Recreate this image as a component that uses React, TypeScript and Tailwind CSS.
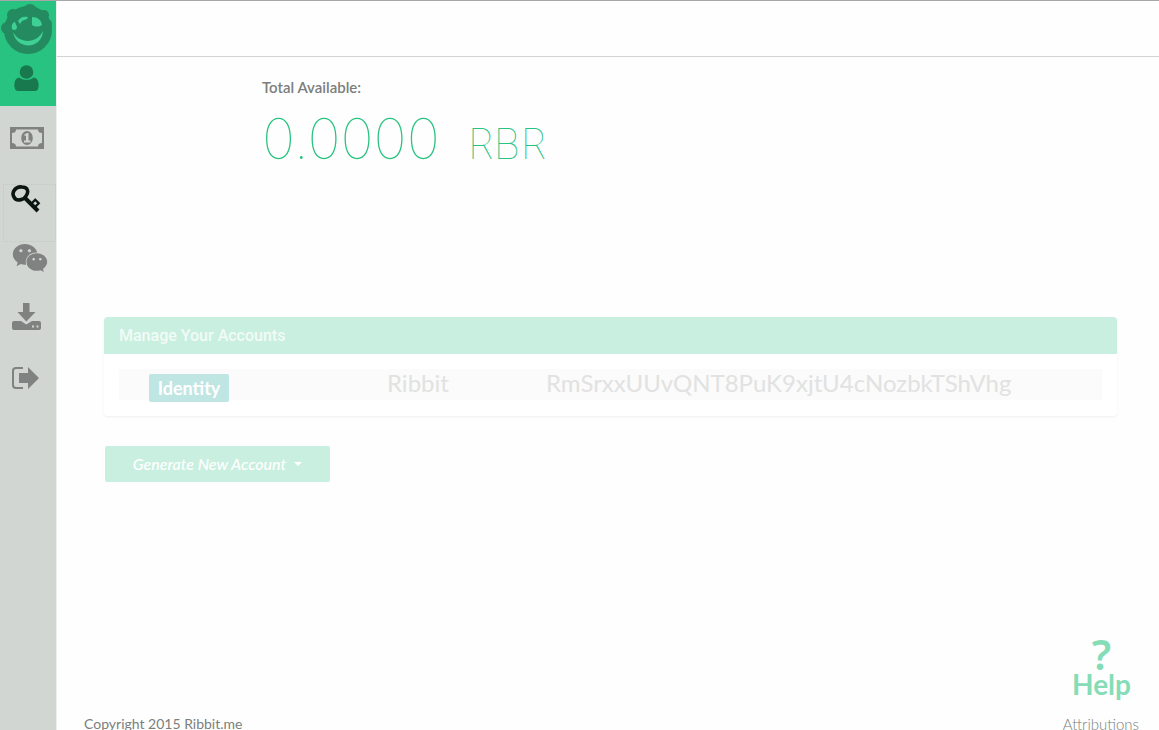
import { FaWeixin } from "react-icons/fa";

function RibbitLogo() {
  return (
    <svg viewBox="0 0 56 56" className="size-14" aria-hidden="true">
      <g fill="#248a60">
        <circle cx="28" cy="29" r="24" />
        <circle cx="7" cy="27" r="6" />
        <circle cx="13" cy="14" r="6" />
        <circle cx="30" cy="10" r="7" />
        <circle cx="44" cy="14" r="5" />
        <circle cx="47" cy="23" r="5" />
      </g>
      <g fill="#3fd094">
        <path d="M18 20C20 16 24 15 28 16L27 18L22 20L20 23Z" />
        <path d="M32 16C38 16 41 19 42 24C39 26 35 26 32 24Z" />
        <path d="M12 28C11 24 13 21 15 21L17 26C17 29 14 30 12 28Z" />
      </g>
      <path d="M13 31C19 43 37 43 43 30C42 49 16 49 13 31Z" fill="#3fd094" />
    </svg>
  );
}

function UserIcon() {
  return (
    <svg viewBox="0 0 25 27" className="h-[27px] w-[25px]" fill="currentColor" aria-hidden="true">
      <circle cx="12.5" cy="7" r="6.8" />
      <path d="M5 12.5Q12.5 17.5 20 12.5C24 13 25 18 24.5 22Q24 26 21 26H4Q1 26 .5 22C0 18 1 13 5 12.5Z" />
    </svg>
  );
}

function MoneyIcon() {
  return (
    <svg viewBox="0 0 34 22" className="h-[22px] w-[34px]" aria-hidden="true">
      <path
        fill="currentColor"
        fillRule="evenodd"
        d="M0 0H34V22H0ZM6 2.5Q6 6 2 6V16Q6 16 6 19.5H28Q28 16 32 16V6Q28 6 28 2.5Z"
      />
      <ellipse cx="17" cy="11" rx="5.8" ry="7" fill="currentColor" />
      <path d="M14.5 7.5L17 6H18.5V13.5H20.5V15.5H14V13.5H16V8.5L14.5 9Z" fill="#d1d6d2" />
    </svg>
  );
}

function KeyIcon() {
  return (
    <svg viewBox="0 0 30 28" className="h-7 w-[30px]" fill="none" stroke="currentColor" aria-hidden="true">
      <path d="M3 12C0 7 5 1 11 2C17 2 18 7 15 11C13 15 5 17 3 12Z" strokeWidth="3.6" />
      <path d="M13 12L27 26" strokeWidth="4" />
      <path d="M20 19L25 14M24 22L28 18M23.5 14L28.5 19" strokeWidth="2.4" />
    </svg>
  );
}

function DownloadIcon() {
  return (
    <svg viewBox="0 0 29 27" className="h-[27px] w-[29px]" fill="currentColor" aria-hidden="true">
      <path d="M11 0H17.5V9H23.5L14.3 18.5L5.5 9H11Z" />
      <path
        fillRule="evenodd"
        d="M2 18H9L14.3 21.5L20 18H27Q29 18 29 20V25Q29 27 27 27H2Q0 27 0 25V20Q0 18 2 18ZM20 22.5V24.5H22V22.5ZM24.5 22.5V24.5H26.5V22.5Z"
      />
    </svg>
  );
}

function ExitIcon() {
  return (
    <svg viewBox="0 0 28 22" className="h-[22px] w-7" aria-hidden="true">
      <path d="M11 1H4Q1 1 1 4V18Q1 21 4 21H11" fill="none" stroke="currentColor" strokeWidth="2" />
      <path d="M7 6H16V0L27 11L16 22V16H7Z" fill="currentColor" />
    </svg>
  );
}

function Sidebar() {
  return (
    <nav aria-label="Main" className="flex w-[57px] shrink-0 flex-col border-r border-[#eceeed] bg-[#d1d6d2]">
      <div className="flex h-[105px] flex-col items-center bg-[#28c381]">
        <a href="#home" aria-label="Ribbit home">
          <RibbitLogo />
        </a>
        <a href="#profile" aria-label="Profile" className="mt-2 pr-1 text-[#18784e]">
          <UserIcon />
        </a>
      </div>
      <div className="flex flex-col pt-0.5 text-[#7f8280]">
        <a href="#wallet" aria-label="Wallet" className="flex h-[60px] items-center justify-center pr-0.5">
          <MoneyIcon />
        </a>
        <div className="pt-4 pl-[3px]">
          <a
            href="#accounts"
            aria-label="Accounts"
            aria-current="page"
            className="flex h-[58px] items-start border border-dotted border-[#d9cd7c] pl-[7px] text-[#0b1512]"
          >
            <KeyIcon />
          </a>
        </div>
        <a href="#chat" aria-label="Chat" className="flex h-8 items-center justify-center pl-1">
          <FaWeixin className="size-9" />
        </a>
        <a href="#backup" aria-label="Backup" className="flex h-[84px] items-center justify-center pr-1">
          <DownloadIcon />
        </a>
        <a href="#logout" aria-label="Log out" className="flex h-10 items-center justify-center pr-1">
          <ExitIcon />
        </a>
      </div>
    </nav>
  );
}

function AccountsPanel() {
  return (
    <section className="overflow-hidden rounded-sm bg-white shadow-sm shadow-black/5">
      <h2 className="bg-[#c9efe0] px-[15px] py-2 font-[Roboto,sans-serif] text-base leading-[21px] font-medium text-[#f2fbf7]">
        Manage Your Accounts
      </h2>
      <div className="px-[15px] pt-[15px] pb-4">
        <table className="w-full table-fixed bg-[#fbfbfb]">
          <tbody>
            <tr className="h-[31px] text-2xl leading-7 text-[#e1e2e1]">
              <td className="w-[268px] pl-[30px]">
                <div className="flex h-[31px] items-start pt-[5px]">
                  <button
                    type="button"
                    className="h-7 w-20 shrink-0 rounded-xs bg-[#bfe6e3] text-lg leading-6 font-bold text-white"
                  >
                    Identity
                  </button>
                </div>
              </td>
              <td className="w-[159px] align-top">Ribbit</td>
              <td className="align-top whitespace-nowrap">RmSrxxUUvQNT8PuK9xjtU4cNozbkTShVhg</td>
            </tr>
          </tbody>
        </table>
      </div>
    </section>
  );
}

export default function App() {
  return (
    <div className="flex h-screen overflow-hidden border-t border-[#a5a8a6] bg-[#fefefe] font-[Lato,sans-serif] text-[#7b7e7c]">
      <Sidebar />
      <div className="flex min-w-0 flex-1 flex-col">
        <header className="h-14 shrink-0 border-b border-[#d2d3d2]" />
        <main className="flex-1 pr-[42px] pl-[47px]">
          <div className="h-[260px] pt-5 pl-[158px]">
            <p className="text-[15px] leading-5 font-semibold">Total Available:</p>
            <p className="mt-3 flex items-baseline gap-7 font-[Inter,sans-serif] leading-[60px] font-thin text-[#28c381]">
              <span className="text-[56px]">0.0000</span>
              <span className="text-[42px]">RBR</span>
            </p>
          </div>
          <AccountsPanel />
          <button
            type="button"
            className="mt-[30px] ml-px flex h-9 w-[225px] items-center justify-center gap-2 rounded-xs bg-[#c9efe0] text-base font-medium text-white italic"
          >
            Generate New Account
            <span aria-hidden="true" className="border-x-4 border-t-4 border-x-transparent border-t-white" />
          </button>
        </main>
        <footer className="-mb-1 flex shrink-0 items-end justify-between pr-5 pl-[27px] text-sm leading-5">
          <p>Copyright 2015 Ribbit.me</p>
          <div className="flex flex-col items-end">
            <a href="#help" className="mr-2 mb-4 flex flex-col items-center text-[#85ddb7]">
              <span aria-hidden="true" className="font-['Noto_Sans',sans-serif] text-[42px] leading-8 font-semibold">
                ?
              </span>
              <span className="text-[28px] leading-7 font-bold">Help</span>
            </a>
            <a href="#attributions" className="text-[15px] font-light">
              Attributions
            </a>
          </div>
        </footer>
      </div>
    </div>
  );
}
